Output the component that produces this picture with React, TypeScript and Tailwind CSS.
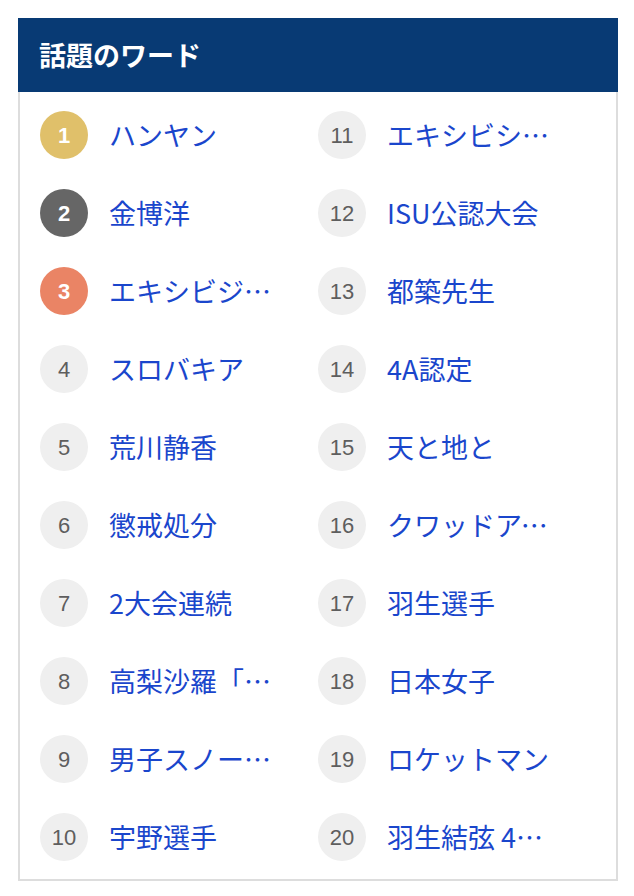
import React from 'react';

const words: string[] = [
  'ハンヤン',
  '金博洋',
  'エキシビジョン',
  'スロバキア',
  '荒川静香',
  '懲戒処分',
  '2大会連続',
  '高梨沙羅「涙の銀」',
  '男子スノーボード',
  '宇野選手',
  'エキシビション',
  'ISU公認大会',
  '都築先生',
  '4A認定',
  '天と地と',
  'クワッドアクセル',
  '羽生選手',
  '日本女子',
  'ロケットマン',
  '羽生結弦 4回転',
];

const badgeClass = (rank: number) => {
  if (rank === 1) return 'bg-[#e0c06a] text-white font-bold';
  if (rank === 2) return 'bg-[#666666] text-white font-bold';
  if (rank === 3) return 'bg-[#ea8465] text-white font-bold';
  return 'bg-[#efefef] text-[#5e5e5e]';
};

const WordRow: React.FC<{ rank: number; word: string }> = ({ rank, word }) => (
  <li className="flex items-center h-[78px]">
    <span
      className={`w-12 h-12 rounded-full flex items-center justify-center shrink-0 text-[22px] font-['Liberation_Sans',Arial,sans-serif] ${badgeClass(rank)}`}
    >
      {rank}
    </span>
    <a className="ml-[21px] w-[174px] truncate text-[27px] leading-normal text-[#1a46cc] font-['Noto_Sans_CJK_JP',sans-serif]">
      {word}
    </a>
  </li>
);

const App: React.FC = () => {
  const left = words.slice(0, 10);
  const right = words.slice(10);
  return (
    <div className="w-[634px] h-[896px] bg-white pt-[18px] px-[18px]">
      <div className="w-[600px]">
        <div className="h-[74px] bg-[#083a74] flex items-center px-[21px]">
          <h2 className="text-white text-[27px] font-bold font-['Noto_Sans_CJK_JP',sans-serif]">話題のワード</h2>
        </div>
        <div className="border-2 border-t-0 border-[#dddddd] px-5 pt-1 pb-[3px] grid grid-cols-2">
          <ul>
            {left.map((w, i) => (
              <WordRow key={i} rank={i + 1} word={w} />
            ))}
          </ul>
          <ul>
            {right.map((w, i) => (
              <WordRow key={i} rank={i + 11} word={w} />
            ))}
          </ul>
        </div>
      </div>
    </div>
  );
};

export default App;
